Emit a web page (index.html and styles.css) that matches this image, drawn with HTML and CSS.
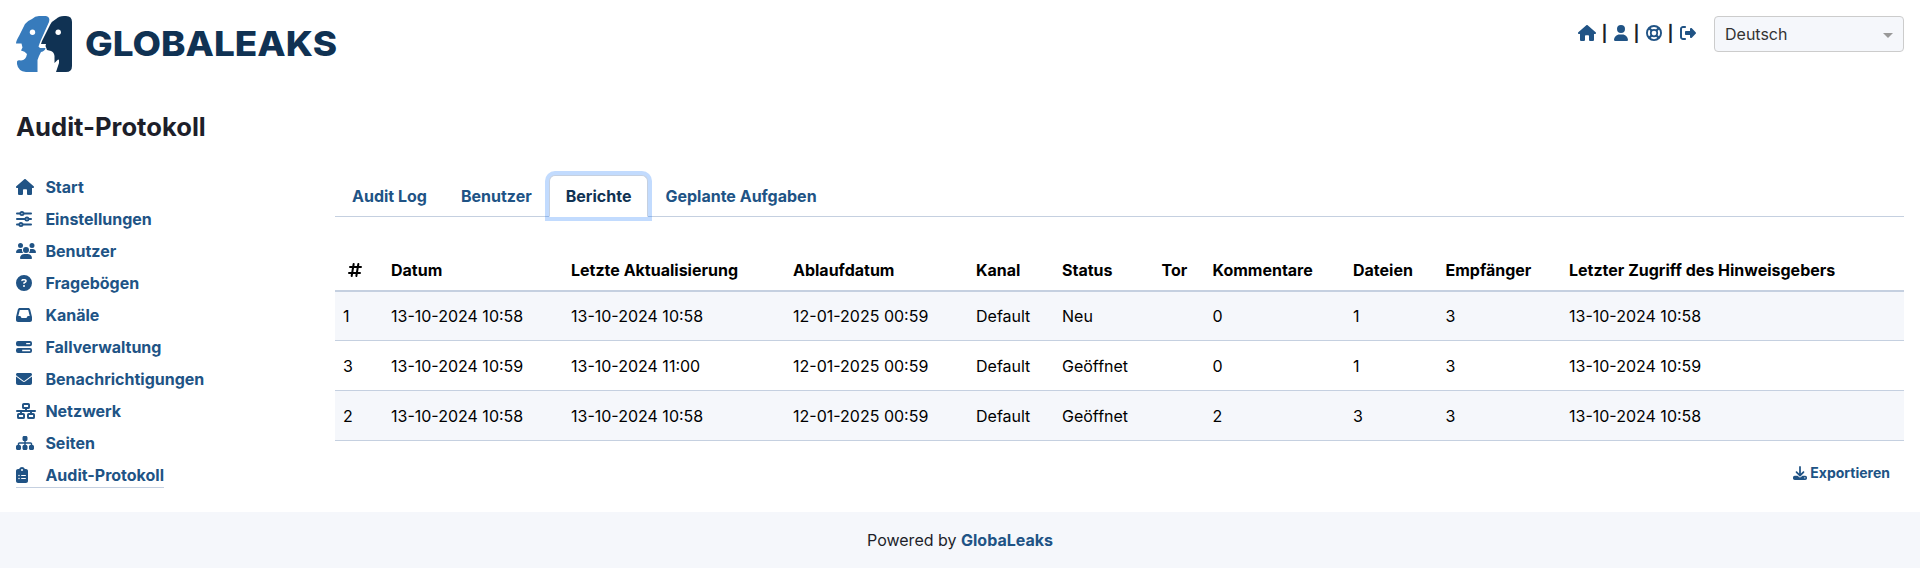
FILE: index.html
```html
<!DOCTYPE html>
<html lang="de">
<head>
<meta charset="utf-8">
<title>Audit-Protokoll - GlobaLeaks</title>
<link rel="stylesheet" href="styles.css">
</head>
<body>
<svg class="sprite" aria-hidden="true">
  <symbol id="house" viewBox="0 0 576 512"><path d="M575.8 255.5c0 18-15 32.1-32 32.1h-32l.7 160.2c0 2.7-.2 5.4-.5 8.1V472c0 22.1-17.9 40-40 40H456c-1.100 0-2.200 0-3.300-.1c-1.400 .1-2.800 .1-4.200 .1H392c-22.100 0-40-17.900-40-40V360c0-17.700-14.300-32-32-32H256c-17.700 0-32 14.300-32 32V472c0 22.100-17.900 40-40 40H104c-22.100 0-40-17.900-40-40V287.600H32c-18 0-32-14-32-32.100c0-9 3-17 10-24L266.400 8c7-7 15-8 22-8s15 2 21 7L564.800 231.500c8 7 12 15 11 24z"/></symbol>
  <symbol id="user" viewBox="0 0 448 512"><path d="M224 256A128 128 0 1 0 224 0a128 128 0 1 0 0 256zm-45.700 48C79.800 304 0 383.800 0 482.300C0 498.700 13.300 512 29.700 512H418.300c16.400 0 29.700-13.300 29.700-29.700C448 383.800 368.200 304 269.700 304H178.300z"/></symbol>
  <symbol id="ring" viewBox="0 0 512 512"><g fill="none" stroke="currentColor"><circle cx="256" cy="256" r="226" stroke-width="60"/><circle cx="256" cy="256" r="104" stroke-width="56"/><path stroke-width="72" d="M92 92l94 94M326 326l94 94M420 92l-94 94M186 326l-94 94"/></g></symbol>
  <symbol id="signout" viewBox="0 0 512 512"><path d="M377.900 105.900L500.700 228.700c7.200 7.200 11.300 17.100 11.300 27.300s-4.100 20.100-11.300 27.300L377.900 406.100c-6.400 6.400-15 9.900-24 9.900c-18.700 0-33.900-15.200-33.900-33.900V320H192c-17.700 0-32-14.300-32-32V224c0-17.700 14.300-32 32-32H320V129.900c0-18.700 15.200-33.900 33.900-33.900c9 0 17.600 3.600 24 9.900zM160 96H96c-17.700 0-32 14.300-32 32V384c0 17.700 14.300 32 32 32h64c17.700 0 32 14.300 32 32s-14.300 32-32 32H96c-53 0-96-43-96-96V128C0 75 43 32 96 32h64c17.700 0 32 14.300 32 32s-14.300 32-32 32z"/></symbol>
  <symbol id="sliders" viewBox="0 0 512 512"><g fill="none" stroke="currentColor" stroke-width="60" stroke-linecap="round"><path d="M30 80H130M250 80H482M30 256H290M410 256H482M30 432H98M218 432H482"/><circle cx="190" cy="80" r="50"/><circle cx="350" cy="256" r="50"/><circle cx="158" cy="432" r="50"/></g></symbol>
  <symbol id="users" viewBox="0 0 640 512"><path d="M144 0a80 80 0 1 1 0 160A80 80 0 1 1 144 0zM512 0a80 80 0 1 1 0 160A80 80 0 1 1 512 0zM0 298.700C0 239.800 47.800 192 106.700 192h42.700c15.900 0 31 3.500 44.600 9.700c-1.300 7.200-1.900 14.700-1.900 22.300c0 38.200 16.800 72.500 43.300 96c-.2 0-.4 0-.7 0H21.300C9.600 320 0 310.400 0 298.700zM405.300 320c-.2 0-.4 0-.7 0c26.600-23.500 43.300-57.800 43.300-96c0-7.600-.7-15-1.900-22.300c13.600-6.300 28.700-9.700 44.600-9.700h42.700C592.200 192 640 239.800 640 298.700c0 11.800-9.600 21.300-21.300 21.300H405.300zM224 224a96 96 0 1 1 192 0 96 96 0 1 1-192 0zM128 485.300C128 411.700 187.700 352 261.300 352H378.700C452.300 352 512 411.700 512 485.300c0 14.700-11.900 26.700-26.700 26.700H154.700c-14.700 0-26.700-11.900-26.700-26.700z"/></symbol>
  <symbol id="question" viewBox="0 0 512 512"><path d="M256 512A256 256 0 1 0 256 0a256 256 0 1 0 0 512zM169.800 165.300c7.900-22.300 29.100-37.300 52.800-37.300h58.300c34.900 0 63.100 28.300 63.100 63.100c0 22.600-12.100 43.500-31.700 54.800L280 264.400c-.2 13-10.900 23.600-24 23.600c-13.300 0-24-10.700-24-24V250.500c0-8.600 4.600-16.500 12.100-20.800l44.300-25.400c4.700-2.700 7.600-7.700 7.600-13.100c0-8.400-6.800-15.100-15.100-15.100H222.600c-3.400 0-6.400 2.100-7.500 5.300l-.4 1.200c-4.400 12.500-18.200 19-30.600 14.600s-19-18.200-14.600-30.600l.4-1.200zM224 352a32 32 0 1 1 64 0 32 32 0 1 1-64 0z"/></symbol>
  <symbol id="inbox" viewBox="0 0 512 512"><path d="M121 32C91.600 32 66 52 58.900 80.500L1.900 308.400C.6 313.500 0 318.700 0 323.900V416c0 35.300 28.700 64 64 64H448c35.300 0 64-28.700 64-64V323.900c0-5.200-.6-10.400-1.900-15.500l-57-227.900C446 52 420.400 32 391 32H121zm0 64H391l48 192H387.800c-12.100 0-23.200 6.800-28.600 17.700l-14.300 28.600c-5.400 10.800-16.500 17.700-28.600 17.700H195.800c-12.100 0-23.200-6.800-28.600-17.700l-14.300-28.600c-5.400-10.800-16.500-17.700-28.600-17.700H73L121 96z"/></symbol>
  <symbol id="server" viewBox="0 0 512 512"><path fill-rule="evenodd" d="M64 64H448a64 64 0 0 1 64 64v36a64 64 0 0 1-64 64H64a64 64 0 0 1-64-64V128A64 64 0 0 1 64 64zM326 124v42H454V124zM64 284H448a64 64 0 0 1 64 64v36a64 64 0 0 1-64 64H64a64 64 0 0 1-64-64V348A64 64 0 0 1 64 284zM198 346v42H454V346z"/></symbol>
  <symbol id="mail" viewBox="0 0 512 512"><path d="M48 64C21.500 64 0 85.500 0 112c0 15.100 7.100 29.300 19.200 38.400L236.800 313.600c11.400 8.500 27 8.500 38.400 0L492.800 150.400c12.100-9.100 19.200-23.300 19.200-38.400c0-26.500-21.500-48-48-48H48zM0 176V384c0 35.300 28.700 64 64 64H448c35.300 0 64-28.700 64-64V176L294.400 339.200c-22.800 17.100-54 17.100-76.800 0L0 176z"/></symbol>
  <symbol id="network" viewBox="0 0 640 512"><g fill="none" stroke="currentColor" stroke-width="62"><rect x="223" y="31" width="194" height="130" rx="28"/><rect x="63" y="351" width="194" height="130" rx="28"/><rect x="383" y="351" width="194" height="130" rx="28"/><path stroke-linecap="round" d="M31 256H609"/><path d="M320 163v93M160 256v93M480 256v93"/></g></symbol>
  <symbol id="sitemap" viewBox="0 0 576 512"><path d="M208 80c0-26.500 21.500-48 48-48h64c26.500 0 48 21.500 48 48v64c0 26.500-21.500 48-48 48h-8v40H464c30.900 0 56 25.100 56 56v32h8c26.500 0 48 21.500 48 48v64c0 26.500-21.500 48-48 48H464c-26.500 0-48-21.500-48-48V368c0-26.500 21.500-48 48-48h8V288c0-4.400-3.600-8-8-8H312v40h8c26.500 0 48 21.500 48 48v64c0 26.500-21.500 48-48 48H256c-26.500 0-48-21.500-48-48V368c0-26.500 21.500-48 48-48h8V280H112c-4.400 0-8 3.600-8 8v32h8c26.500 0 48 21.500 48 48v64c0 26.500-21.500 48-48 48H48c-26.500 0-48-21.500-48-48V368c0-26.500 21.500-48 48-48h8V288c0-30.900 25.100-56 56-56H264V192h-8c-26.500 0-48-21.500-48-48V80z"/></symbol>
  <symbol id="clipboard" viewBox="0 0 384 512"><path fill-rule="evenodd" d="M192 0c-41.800 0-77.400 26.700-90.500 64H64C28.700 64 0 92.700 0 128V448c0 35.300 28.700 64 64 64H320c35.300 0 64-28.700 64-64V128c0-35.300-28.700-64-64-64H282.500C269.400 26.700 233.800 0 192 0zm0 64a32 32 0 1 1 0 64 32 32 0 1 1 0-64zM72 272a24 24 0 1 1 48 0 24 24 0 1 1-48 0zm104-16H304c8.800 0 16 7.200 16 16s-7.200 16-16 16H176c-8.800 0-16-7.200-16-16s7.200-16 16-16zM72 368a24 24 0 1 1 48 0 24 24 0 1 1-48 0zm88 0c0-8.800 7.200-16 16-16H304c8.800 0 16 7.200 16 16s-7.200 16-16 16H176c-8.800 0-16-7.200-16-16z"/></symbol>
  <symbol id="download" viewBox="0 0 512 512"><path d="M288 32c0-17.700-14.300-32-32-32s-32 14.300-32 32V274.700l-73.400-73.400c-12.500-12.500-32.800-12.500-45.300 0s-12.500 32.800 0 45.300l128 128c12.500 12.500 32.800 12.500 45.300 0l128-128c12.500-12.500 12.500-32.800 0-45.300s-32.800-12.500-45.300 0L288 274.700V32zM64 352c-35.300 0-64 28.700-64 64v32c0 35.300 28.700 64 64 64H448c35.300 0 64-28.700 64-64V416c0-35.300-28.700-64-64-64H346.500l-45.300 45.300c-25 25-65.500 25-90.500 0L165.500 352H64zm368 56a24 24 0 1 1 0 48 24 24 0 1 1 0-48z"/></symbol>
  <symbol id="hash" viewBox="0 0 448 512"><path fill="none" stroke="currentColor" stroke-width="64" stroke-linecap="round" d="M64 160H416M32 352H384M181 64L117 448M331 64L267 448"/></symbol>
</svg>

<header class="header">
  <svg class="logo" viewBox="0 0 324 56" role="img" aria-label="GlobaLeaks">
    <path class="logo-light" d="M16 3Q19 0 23 0H30Q34.500 1 33 6L24.500 25L22.500 30.500L24 32H29.500Q29 35 25 36L23 40L21.500 44V56H10Q2 55 1 48V45.500Q2 43.500 5 44.500Q10 44 11 38Q9 35 5 34.500L6.500 31.500L5.500 27.500H0Q0 25 3 20L9 8Q12 4.500 16 3Z"/>
    <path class="logo-dark" d="M40 3Q43 0 48 0H50Q56 0 56 6V50Q56 56 50 56H40L43 47V44Q42.500 43 41 44.500L38.500 47V40Q38 36 35 35L31 34L29.500 30L30 28H25L26 25L34 9Q36 5 40 3Z"/>
    <circle class="logo-eye" cx="16.500" cy="16.300" r="2.700"/>
    <circle class="logo-eye" cx="42.200" cy="16.300" r="2.700"/>
    <text class="logo-word" x="69" y="39.800" textLength="252" lengthAdjust="spacingAndGlyphs">GLOBALEAKS</text>
  </svg>
  <div class="tools">
    <nav class="quick">
      <a href="#"><svg class="w18"><use href="#house"/></svg></a><span>|</span>
      <a href="#"><svg class="w14"><use href="#user"/></svg></a><span>|</span>
      <a href="#"><svg class="w16"><use href="#ring"/></svg></a><span>|</span>
      <a href="#"><svg class="w16"><use href="#signout"/></svg></a>
    </nav>
    <div class="language"><span>Deutsch</span><i class="caret"></i></div>
  </div>
</header>

<h1 class="title">Audit-Protokoll</h1>

<main class="main">
  <nav class="sidebar">
    <a href="#"><span class="icon"><svg class="w18"><use href="#house"/></svg></span>Start</a>
    <a href="#"><span class="icon"><svg class="w16"><use href="#sliders"/></svg></span>Einstellungen</a>
    <a href="#"><span class="icon"><svg class="w20"><use href="#users"/></svg></span>Benutzer</a>
    <a href="#"><span class="icon"><svg class="w16"><use href="#question"/></svg></span>Fragebögen</a>
    <a href="#"><span class="icon"><svg class="w16"><use href="#inbox"/></svg></span>Kanäle</a>
    <a href="#"><span class="icon"><svg class="w16"><use href="#server"/></svg></span>Fallverwaltung</a>
    <a href="#"><span class="icon"><svg class="w16"><use href="#mail"/></svg></span>Benachrichtigungen</a>
    <a href="#"><span class="icon"><svg class="w20"><use href="#network"/></svg></span>Netzwerk</a>
    <a href="#"><span class="icon"><svg class="w18"><use href="#sitemap"/></svg></span>Seiten</a>
    <a href="#" class="current"><span class="icon"><svg class="w12"><use href="#clipboard"/></svg></span>Audit-Protokoll</a>
  </nav>

  <section class="content">
    <nav class="tabs">
      <a href="#">Audit Log</a>
      <a href="#">Benutzer</a>
      <a href="#" class="active">Berichte</a>
      <a href="#">Geplante Aufgaben</a>
    </nav>

    <table class="reports">
      <colgroup><col class="c-id"><col class="c-date"><col class="c-update"><col class="c-expiry"><col class="c-channel"><col class="c-status"><col class="c-tor"><col class="c-comments"><col class="c-files"><col class="c-recipients"><col></colgroup>
      <thead>
        <tr><th class="num"><svg class="w14" role="img" aria-label="#"><use href="#hash"/></svg></th><th>Datum</th><th>Letzte Aktualisierung</th><th>Ablaufdatum</th><th>Kanal</th><th>Status</th><th>Tor</th><th>Kommentare</th><th>Dateien</th><th>Empfänger</th><th>Letzter Zugriff des Hinweisgebers</th></tr>
      </thead>
      <tbody>
        <tr><td>1</td><td>13-10-2024 10:58</td><td>13-10-2024 10:58</td><td>12-01-2025 00:59</td><td>Default</td><td>Neu</td><td></td><td>0</td><td>1</td><td>3</td><td>13-10-2024 10:58</td></tr>
        <tr><td>3</td><td>13-10-2024 10:59</td><td>13-10-2024 11:00</td><td>12-01-2025 00:59</td><td>Default</td><td>Geöffnet</td><td></td><td>0</td><td>1</td><td>3</td><td>13-10-2024 10:59</td></tr>
        <tr><td>2</td><td>13-10-2024 10:58</td><td>13-10-2024 10:58</td><td>12-01-2025 00:59</td><td>Default</td><td>Geöffnet</td><td></td><td>2</td><td>3</td><td>3</td><td>13-10-2024 10:58</td></tr>
      </tbody>
    </table>

    <a href="#" class="export"><svg class="w14"><use href="#download"/></svg>Exportieren</a>
  </section>
</main>

<footer class="footer">Powered by&nbsp;<a href="#">GlobaLeaks</a></footer>
</body>
</html>
```

FILE: styles.css
```css
:root {
  --link: #205385;
  --navy: #103253;
  --line: #c5d0e0;
  --tint: #f5f7fb;
}

* { box-sizing: border-box; }

body {
  margin: 0;
  height: 568px;
  display: flex;
  flex-direction: column;
  overflow: hidden;
  background: #fff;
  color: #1d1f2a;
  font: 400 16px/24px Inter, "Liberation Sans", sans-serif;
}

a { color: var(--link); font-weight: 700; text-decoration: none; }

svg { display: block; flex: none; height: 16px; fill: currentColor; }
.sprite { position: absolute; width: 0; height: 0; }
.w12 { width: 12px; }
.w14 { width: 14px; }
.w16 { width: 16px; }
.w18 { width: 18px; }
.w20 { width: 20px; }

.header {
  display: flex;
  justify-content: space-between;
  align-items: flex-start;
  padding: 16px 16px 0;
}
.logo { width: 324px; height: 56px; }
.logo-light { fill: #377bbc; }
.logo-dark, .logo-word { fill: var(--navy); }
.logo-eye { fill: #fff; }
.logo-word { font: 800 34.5px Inter, sans-serif; }

.tools { display: flex; gap: 18px; }
.quick { display: flex; align-items: center; height: 34px; }
.quick span { width: 18px; padding-right: 1px; text-align: center; font-weight: 700; line-height: 34px; }
.language {
  display: flex;
  align-items: center;
  justify-content: space-between;
  width: 190px;
  height: 36px;
  padding: 0 10px;
  border: 1px solid #ccc;
  border-radius: 4px;
  background: var(--tint);
  color: #333;
}
.caret { margin-top: 2px; border: solid transparent; border-width: 5px 5px 0; border-top-color: #999; }

.title { margin: 39px 16px 1px; font-size: 25.6px; line-height: 31px; font-weight: 700; }

.main { display: flex; flex: 1; padding: 32px 16px 0; }
.sidebar {
  display: flex;
  flex-direction: column;
  align-items: flex-start;
  width: 319px;
  margin-top: -1px;
}
.sidebar a {
  display: flex;
  align-items: center;
  height: 26px;
  margin-bottom: 6px;
  border-bottom: 1px solid transparent;
}
.sidebar a.current { border-color: var(--line); }
.icon { width: 29.4px; }

.content { display: flex; flex: 1; flex-direction: column; }
.tabs { display: flex; border-bottom: 1px solid var(--line); }
.tabs a {
  margin-bottom: -1px;
  padding: 8px 16px;
  border: 1px solid transparent;
  border-radius: 6px 6px 0 0;
}
.tabs .active {
  border-color: var(--line) var(--line) #fff;
  background: #fff;
  box-shadow: 0 0 0 4px rgba(13, 110, 253, .25);
  color: var(--navy);
}

.reports {
  width: 100%;
  margin-top: 32px;
  border-collapse: separate;
  border-spacing: 0;
  table-layout: fixed;
  color: #000;
}
.reports th, .reports td { padding: 0 8px; text-align: left; white-space: nowrap; }
.reports th { height: 43px; border-bottom: 2px solid var(--line); font-weight: 700; }
.reports .num { padding-left: 12.5px; }
.reports td { height: 50px; border-bottom: 1px solid var(--line); }
.reports tbody tr:nth-child(odd) { background: var(--tint); }
.reports tbody tr:first-child td { height: 49px; }
.c-id { width: 48px; }
.c-date { width: 180px; }
.c-update { width: 222px; }
.c-expiry { width: 183px; }
.c-channel { width: 86px; }
.c-status { width: 99.500px; }
.c-tor { width: 51px; }
.c-comments { width: 140.500px; }
.c-files { width: 92.500px; }
.c-recipients { width: 123.500px; }

.export {
  display: flex;
  align-items: center;
  align-self: flex-end;
  gap: 3px;
  margin: 20px 14px 0 0;
  font-size: 14px;
}
.export svg { height: 14px; }

.footer {
  display: flex;
  align-items: center;
  justify-content: center;
  height: 56px;
  background: var(--tint);
}
```
